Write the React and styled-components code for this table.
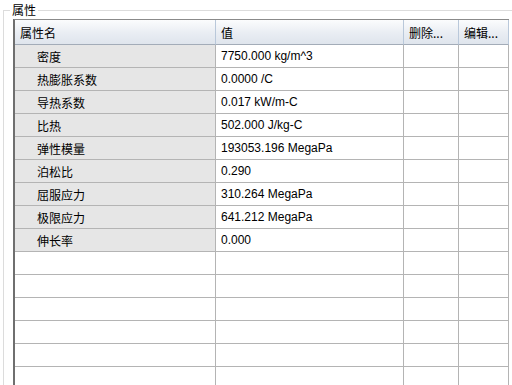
import React from 'react';
import styled, { createGlobalStyle } from 'styled-components';

const GlobalStyle = createGlobalStyle`
  html, body {
    margin: 0;
    padding: 0;
    background: #ffffff;
  }
  body {
    font-family: "Liberation Sans", "Noto Sans CJK SC", sans-serif;
    font-size: 12px;
    color: #000000;
  }
`;

const Page = styled.div`
  width: 512px;
  height: 385px;
  overflow: hidden;
  background: #ffffff;
  padding-top: 2px;
  box-sizing: border-box;
`;

const GroupBox = styled.fieldset`
  margin: 0 0 0 3px;
  padding: 1px 0 0 9px;
  border: 1px solid #dcdcdc;
  border-right: none;
  border-bottom: none;
  height: 400px;
  min-width: 0;
`;

const Legend = styled.legend`
  padding: 0 2px;
  margin-left: -3px;
  font-family: "Noto Sans CJK SC", sans-serif;
  font-size: 12px;
  line-height: 16px;
  color: #000000;
`;

const Grid = styled.table`
  border-collapse: separate;
  border-spacing: 0;
  table-layout: fixed;
  width: 496px;
  border-top: 1px solid #8a8a8a;
  border-left: 2px solid #6f6f6f;
`;

const HeadCell = styled.th`
  box-sizing: border-box;
  height: 25px;
  padding: 0 0 0 5px;
  text-align: left;
  font-weight: normal;
  font-family: "Noto Sans CJK SC", sans-serif;
  font-size: 12px;
  white-space: nowrap;
  overflow: hidden;
  background: linear-gradient(#fbfcfd, #e9edf3 55%, #dfe5ed);
  border-right: 1px solid #b9c8da;
  border-bottom: 1px solid #a3acb8;
`;

const Cell = styled.td`
  box-sizing: border-box;
  height: 23px;
  padding: 0 0 0 ${(p) => (p.$name ? '22px' : '5px')};
  font-family: ${(p) =>
    p.$name ? '"Noto Sans CJK SC", sans-serif' : '"Liberation Sans", "Noto Sans CJK SC", sans-serif'};
  font-size: 12px;
  white-space: nowrap;
  overflow: hidden;
  background: ${(p) => (p.$name ? '#e6e6e6' : '#ffffff')};
  border-right: 1px solid #b4b4b4;
  border-bottom: 1px solid #b4b4b4;
`;

const properties = [
  ['密度', '7750.000 kg/m^3'],
  ['热膨胀系数', '0.0000 /C'],
  ['导热系数', '0.017 kW/m-C'],
  ['比热', '502.000 J/kg-C'],
  ['弹性模量', '193053.196 MegaPa'],
  ['泊松比', '0.290'],
  ['屈服应力', '310.264 MegaPa'],
  ['极限应力', '641.212 MegaPa'],
  ['伸长率', '0.000'],
];

const EMPTY_ROWS = 7;

function App() {
  const rows = [
    ...properties,
    ...Array.from({ length: EMPTY_ROWS }, () => ['', '']),
  ];
  return (
    <Page>
      <GlobalStyle />
      <GroupBox>
        <Legend>属性</Legend>
        <Grid>
          <colgroup>
            <col style={{ width: 201 }} />
            <col style={{ width: 188 }} />
            <col style={{ width: 55 }} />
            <col style={{ width: 50 }} />
          </colgroup>
          <thead>
            <tr>
              <HeadCell>属性名</HeadCell>
              <HeadCell>值</HeadCell>
              <HeadCell>删除...</HeadCell>
              <HeadCell>编辑...</HeadCell>
            </tr>
          </thead>
          <tbody>
            {rows.map(([name, value], i) => (
              <tr key={i}>
                <Cell $name={i < properties.length}>{name}</Cell>
                <Cell>{value}</Cell>
                <Cell />
                <Cell />
              </tr>
            ))}
          </tbody>
        </Grid>
      </GroupBox>
    </Page>
  );
}

export default App;
